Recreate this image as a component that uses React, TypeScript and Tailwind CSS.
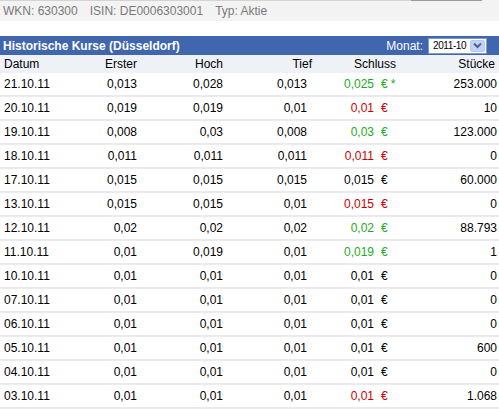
import React from 'react';

type Row = {
  date: string;
  first: string;
  high: string;
  low: string;
  close: string;
  tone: 'up' | 'down' | 'flat';
  star?: boolean;
  volume: string;
};

const rows: Row[] = [
  { date: '21.10.11', first: '0,013', high: '0,028', low: '0,013', close: '0,025', tone: 'up', star: true, volume: '253.000' },
  { date: '20.10.11', first: '0,019', high: '0,019', low: '0,01', close: '0,01', tone: 'down', volume: '10' },
  { date: '19.10.11', first: '0,008', high: '0,03', low: '0,008', close: '0,03', tone: 'up', volume: '123.000' },
  { date: '18.10.11', first: '0,011', high: '0,011', low: '0,011', close: '0,011', tone: 'down', volume: '0' },
  { date: '17.10.11', first: '0,015', high: '0,015', low: '0,015', close: '0,015', tone: 'flat', volume: '60.000' },
  { date: '13.10.11', first: '0,015', high: '0,015', low: '0,01', close: '0,015', tone: 'down', volume: '0' },
  { date: '12.10.11', first: '0,02', high: '0,02', low: '0,02', close: '0,02', tone: 'up', volume: '88.793' },
  { date: '11.10.11', first: '0,01', high: '0,019', low: '0,01', close: '0,019', tone: 'up', volume: '1' },
  { date: '10.10.11', first: '0,01', high: '0,01', low: '0,01', close: '0,01', tone: 'flat', volume: '0' },
  { date: '07.10.11', first: '0,01', high: '0,01', low: '0,01', close: '0,01', tone: 'flat', volume: '0' },
  { date: '06.10.11', first: '0,01', high: '0,01', low: '0,01', close: '0,01', tone: 'flat', volume: '0' },
  { date: '05.10.11', first: '0,01', high: '0,01', low: '0,01', close: '0,01', tone: 'flat', volume: '600' },
  { date: '04.10.11', first: '0,01', high: '0,01', low: '0,01', close: '0,01', tone: 'flat', volume: '0' },
  { date: '03.10.11', first: '0,01', high: '0,01', low: '0,01', close: '0,01', tone: 'down', volume: '1.068' },
];

const toneClass = {
  up: 'text-[#1eaa1e]',
  down: 'text-[#c80000]',
  flat: 'text-black',
};

const App: React.FC = () => {
  return (
    <div className="w-[499px] h-[409px] overflow-hidden bg-white text-[12px] leading-none text-black font-['Liberation_Sans',Arial,sans-serif]">
      {/* Stammdaten bar */}
      <div className="h-[21px] bg-[#f3f3f3] flex flex-col">
        <div className="flex h-px">
          <div className="w-[411px] bg-[#d4d4d4]" />
          <div className="w-[71px] bg-[#9a9a9a]" />
        </div>
        <div className="flex-1 flex items-center pl-[3px] gap-[12px] text-[#7a7a7a]">
          <span>WKN: 630300</span>
          <span>ISIN: DE0006303001</span>
          <span>Typ: Aktie</span>
        </div>
      </div>

      <div className="h-[15px]" />

      {/* Title bar */}
      <div className="h-[19px] bg-[#4066ae] flex items-center justify-between pl-[3px] pr-[12px]">
        <span className="font-bold text-white">Historische Kurse (Düsseldorf)</span>
        <div className="flex items-center gap-[5px]">
          <span className="text-white">Monat:</span>
          <div className="h-[16px] w-[59px] bg-white border border-[#7f9db9] flex items-center justify-between pl-[4px] pr-px">
            <span className="whitespace-nowrap text-[10px] tracking-[-0.4px]">2011-10</span>
            <div className="h-[12px] w-[15px] shrink-0 rounded-[2px] bg-[#c1d3fb] border border-[#b4c8f6] flex items-center justify-center">
              <svg width="9" height="7" viewBox="0 0 9 7">
                <path d="M1 1.5 L4.5 5 L8 1.5" fill="none" stroke="#4d6185" strokeWidth="2" />
              </svg>
            </div>
          </div>
        </div>
      </div>

      {/* Column headers */}
      <div className="h-[18px] bg-[#eef1f6] grid grid-cols-[60px_79px_86px_89px_84px_1fr] items-center">
        <span className="pl-[4px]">Datum</span>
        <span className="text-right pr-[2px]">Erster</span>
        <span className="text-right pr-[2px]">Hoch</span>
        <span className="text-right pr-[2px]">Tief</span>
        <span className="text-right pr-[2px]">Schluss</span>
        <span className="text-right pr-[4px]">Stücke</span>
      </div>

      {/* Rows */}
      {rows.map((r) => (
        <div
          key={r.date}
          className="h-[24px] border-b-2 border-[#ebebeb] grid grid-cols-[60px_79px_86px_84px_67px_40px_1fr] items-center"
        >
          <span className="pl-[4px]">{r.date}</span>
          <span className="text-right pr-[2px]">{r.first}</span>
          <span className="text-right pr-[2px]">{r.high}</span>
          <span className="text-right pr-[2px]">{r.low}</span>
          <span className={`text-right pr-[2px] ${toneClass[r.tone]}`}>{r.close}</span>
          <span className={`pl-[5px] ${toneClass[r.tone]}`}>
            €{r.star && <span className="ml-[3px]">*</span>}
          </span>
          <span className="text-right pr-[2px]">{r.volume}</span>
        </div>
      ))}
    </div>
  );
};

export default App;
